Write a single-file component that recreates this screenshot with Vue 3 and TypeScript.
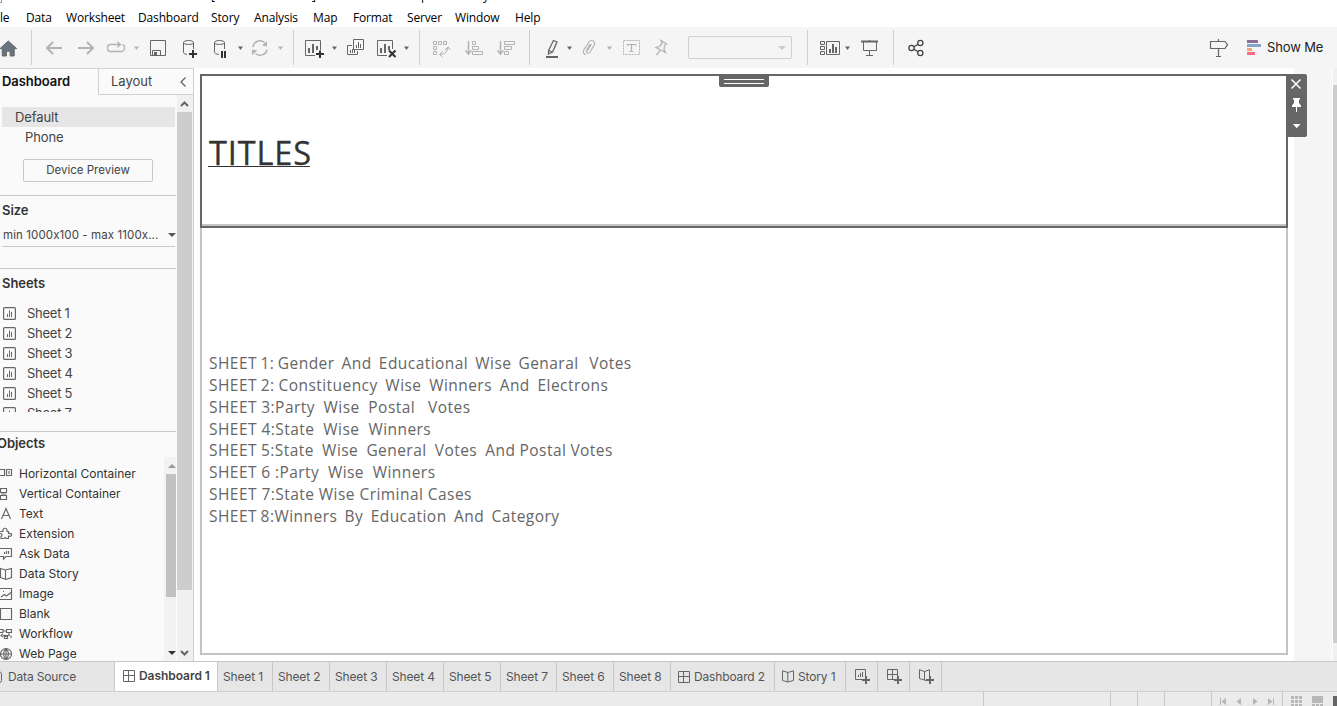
<script setup lang="ts">
interface Cell { x: number; w: number; name: string; dim?: boolean }

const menus = [
  { t: 'File', c: 'm-file' }, { t: 'Data', c: 'm-data' }, { t: 'Worksheet', c: 'm-ws' },
  { t: 'Dashboard', c: 'm-db' }, { t: 'Story', c: 'm-st' }, { t: 'Analysis', c: 'm-an' },
  { t: 'Map', c: 'm-map' }, { t: 'Format', c: 'm-fmt' }, { t: 'Server', c: 'm-srv' },
  { t: 'Window', c: 'm-win' }, { t: 'Help', c: 'm-help' },
]

// Toolbar glyphs share one drawing space; each cell shows its own slice of it.
const shapes: Record<string, string> = {
  home: '<path d="M8.3 41 0 48.6H2.3V56H6.4V51.2H10.1V56H14.2V48.6H16.6Z" fill="#697483"/>',
  back: '<path d="M53 42 47 48 53 54M47 48H62" stroke-width="2"/>',
  forward: '<path d="M87 42 93 48 87 54M78 48H93" stroke-width="2"/>',
  redo: '<path d="M119 44.5H110.5A3 3 0 0 0 107.5 47.500V48.500A3 3 0 0 0 110.500 51.500H121.500A3 3 0 0 0 124.500 48.500V47.500Q124.500 45 122.500 44.700" stroke-width="1.3"/><path d="M117.500 41 121.500 44.500 117.500 48Z" fill="#b3b3b3" stroke="none"/>',
  save: '<path d="M150.500 40.500H165.500V55.500H150.500ZM152.500 55V50.500H160.500V55"/><path d="M154 52H157V55H154Z" fill="#666" stroke="none"/>',
  dbadd: '<path d="M187 54.500Q183.500 54 183.500 52.500V42.500M193.500 42.500V49"/><ellipse cx="188.500" cy="42.500" rx="5" ry="2"/><path d="M193 50V58M189 54H197" stroke="#333" stroke-width="2"/>',
  dbpause: '<path d="M219 54.500Q214.500 54 214.500 52.500V42.500M224.500 42.500V49"/><ellipse cx="219.500" cy="42.500" rx="5" ry="2"/><path d="M222 51V58M225 51V58" stroke="#333" stroke-width="2"/>',
  refresh: '<path d="M253 47A7 7 0 0 1 264.500 42.500M267 49.500A7 7 0 0 1 255.500 53.500" stroke-width="1.5"/><path d="M267 41V46.500L262 45.500ZM252 55V49.500L257.500 50.500Z" fill="#b3b3b3" stroke="none"/>',
  newsheet: '<path d="M315 55.500H305.500V40.500H320.500V50"/><path d="M309 48V53M313 44V53M317 46V50" stroke-width="2"/><path d="M320 50.500V58M316 54H324" stroke="#333" stroke-width="2"/>',
  dup: '<path d="M353.500 39.500H363.500V49.500H353.500ZM352 45.500H347.500V54.500H357.500V51"/><path d="M356.500 45V48M358.500 42V48M360.500 44V48M350.500 50V53M352.500 49V53M354.500 50V53"/>',
  clear: '<path d="M387 55.500H377.500V40.500H392.500V49"/><path d="M381 48V53M385 44V53M389 46V50" stroke-width="2"/><path d="M389 50.500 395.500 57M395.500 50.500 389 57" stroke="#333" stroke-width="2"/>',
  swap: '<path d="M433.500 41.500H436.500V44.500H433.500ZM438.500 41.500H441.500V44.500H438.500ZM443.500 41.500H446.500V44.500H443.500ZM433.500 46.500H436.500V49.500H433.500ZM433.500 51.500H436.500V54.500H433.500ZM440 54.500Q447 54 448 47.500M445 50 448.200 47 450 50M442.500 51.500 439.500 54.500 442.500 57"/>',
  asc: '<path d="M468.500 41V54M465.500 50.500 468.500 54 471.500 50.500" stroke-width="1.5"/><path d="M472.500 41.500H475.500V44.500H472.500ZM472.500 46.500H478.500V49.500H472.500ZM472.500 51.500H482.500V54.500H472.500Z"/>',
  desc: '<path d="M500.500 41V54M497.500 50.500 500.500 54 503.500 50.500" stroke-width="1.5"/><path d="M504.500 41.500H514.500V44.500H504.500ZM504.500 46.500H511.500V49.500H504.500ZM504.500 51.500H508.500V54.500H504.500Z"/>',
  mark: '<path d="M548.500 50.500 553.500 40.500 557 42 552.500 52 548.500 54ZM548.500 50.500 552.500 52" stroke-width="1.300"/><path d="M546 57H558" stroke-width="2"/>',
  clip: '<path d="M591.500 44 586.500 52Q588 54.500 590 52L594.500 44.500Q595 40.500 591.500 40.500 590 40.500 588.500 42.500L583.500 50.500Q583 54.500 586 54.500M590 44 586.500 50.500" stroke-width="1.200"/>',
  text: '<path d="M623.500 40.500H639.500V54.500H623.500Z" stroke-dasharray="2 1"/><path d="M627.500 46V44.500H635.500V46M631.500 44.500V51.500M629.500 51.500H633.500" stroke-width="1.200"/>',
  pin: '<path d="M661 40.500 666.500 44 664.500 45.500 664 49.500 665.500 52.500 656 47.500 659.500 46.500 662 43.500ZM660 50.500 656.500 55" stroke-width="1.300"/>',
  cards: '<path d="M820.500 41.500H824.500V44.500H820.500ZM820.500 46.500H824.500V49.500H820.500ZM820.500 51.500H824.500V54.500H820.500ZM826.500 41.500H839.500V54.500H826.500Z"/><path d="M830 49V53M833 44V53M836 47V53" stroke-width="2"/>',
  present: '<path d="M861 41.500H878" stroke-width="2"/><path d="M863.500 42V50.500H876.500V42M869.500 40V41M869.500 51V55.500M866 55.500H873"/>',
  share: '<g stroke="#444" stroke-width="1.300"><path d="M914 46.700 918 44.200M914 49.300 918 51.800"/><circle cx="911.500" cy="48" r="2.600"/><circle cx="920.300" cy="43" r="2.600"/><circle cx="920.300" cy="53" r="2.600"/></g>',
  sign: '<path d="M1210.500 41.500H1225L1227.500 44.700 1225 48.500H1210.500ZM1218.500 39V41M1218.500 49V56M1216 56.500H1221" stroke-width="1.200"/>',
}
const caret = (x: number) => `<path d="M${x} 46.500H${x + 5}L${x + 2.5} 50Z" fill="currentColor" stroke="none"/>`
for (const x of [134, 238, 278, 332, 404, 567, 607, 845]) shapes['caret' + x] = caret(x)

const c = (name: string, x: number, w: number, dim = false): Cell => ({ name, x, w, dim })
const groups: Cell[][] = [
  [c('home', 0, 31)],
  [c('back', 32, 39, true), c('forward', 71, 31, true), c('redo', 102, 28, true), c('caret134', 130, 16, true), c('save', 146, 31), c('dbadd', 177, 33), c('dbpause', 210, 24), c('caret238', 234, 14), c('refresh', 248, 27, true), c('caret278', 275, 18, true)],
  [c('newsheet', 294, 34), c('caret332', 328, 15), c('dup', 343, 30), c('clear', 373, 28), c('caret404', 401, 18)],
  [c('swap', 420, 40, true), c('asc', 460, 32, true), c('desc', 492, 37, true)],
  [c('mark', 530, 33), c('caret567', 563, 16), c('clip', 579, 24, true), c('caret607', 603, 15, true), c('text', 618, 32, true), c('pin', 650, 38, true)],
  [c('cards', 808, 34), c('caret845', 842, 15), c('present', 857, 36)],
  [c('share', 894, 40)],
]

const sheets = ['Sheet 1', 'Sheet 2', 'Sheet 3', 'Sheet 4', 'Sheet 5', 'Sheet 7']
const objects = [
  { t: 'Horizontal Container', d: 'M-1.500 5.500H4.500V11.500H-1.500ZM6.500 5.500H11.500V11.500H6.500ZM9 7V10' },
  { t: 'Vertical Container', d: 'M.5 4.500H6.500V8.500H.5ZM.5 11.500H6.500V15.500H.5ZM1 10H6' },
  { t: 'Text', d: 'M1.500 15 6 4.500 10.500 15M3.200 11.500H8.800' },
  { t: 'Extension', d: 'M-1 7.500H3V5.500Q5 3 7 5.500V7.500H8.500V9.500Q12 9 11.500 11 11 13 8.500 12V14.500H6Q5.500 12.500 4 14.500H1V12.500Q3 11 1 9.500H-1' },
  { t: 'Ask Data', d: 'M-1 4.500H11.500V12.500H6L3.500 15V12.500H-1M4.500 8V10M6.500 7V10M8.500 7V10' },
  { t: 'Data Story', d: 'M.5 4.500 5.500 6 11.500 4.500V13.500L6 15.500 .5 13.500ZM5.500 6V15' },
  { t: 'Image', d: 'M-1 4.500H11.500V15.500H-1M1 13 4.500 10.500 6.500 12 11 8.500M3 7.500H4' },
  { t: 'Blank', d: 'M.5 4.500H11.500V15.500H.5Z' },
  { t: 'Workflow', d: 'M0 5.500H3V8.500H0M3 7H6M6.500 5.500H11.500V8.500H6.500ZM9 9V11.500H3M3 10 1 11.500 3 13M4.500 12.500H7.500V14.500H4.500ZM11 11.500V14' },
  { t: 'Web Page', d: 'M.5 10A5.500 5.500 0 1 1 11.500 10A5.500 5.500 0 1 1 .5 10H11.500M6 4.500Q1 10 6 15.500 11 10 6 4.500M6 4.500V15.500' },
]

const lines = [
  ['l1', 'SHEET 1: Gender  And  Educational  Wise  Genaral   Votes'],
  ['l2', 'SHEET 2: Constituency  Wise  Winners  And  Electrons'],
  ['l3', 'SHEET 3:Party  Wise  Postal   Votes'],
  ['l4', 'SHEET 4:State  Wise  Winners'],
  ['l5', 'SHEET 5:State  Wise  General  Votes  And Postal Votes'],
  ['l6', 'SHEET 6 :Party  Wise  Winners'],
  ['l7', 'SHEET 7:State Wise Criminal Cases'],
  ['l8', 'SHEET 8:Winners  By  Education  And  Category'],
]

const sheetTabs = [
  { t: 'Sheet 1', c: 'w55' }, { t: 'Sheet 2', c: 'w57' }, { t: 'Sheet 3', c: 'w57' }, { t: 'Sheet 4', c: 'w57' },
  { t: 'Sheet 5', c: 'w57' }, { t: 'Sheet 7', c: 'w56' }, { t: 'Sheet 6', c: 'w57' }, { t: 'Sheet 8', c: 'w57' },
]
</script>

<template>
  <div class="app">
    <header class="menubar">
      <div class="caption"><i class="appicon" /><span class="k1">[</span><span class="k2">]</span><span class="k3">p</span><span>y</span></div>
      <span v-for="m in menus" :key="m.t" class="menu" :class="m.c">{{ m.t }}</span>
    </header>

    <div class="toolbar">
      <template v-for="(g, gi) in groups" :key="gi">
        <div class="group">
          <svg v-for="i in g" :key="i.name" :class="{ dim: i.dim }" :width="i.w" height="41" :viewBox="`${i.x} 27 ${i.w} 41`" v-html="shapes[i.name]" />
          <div v-if="gi === 4" class="combo"><i class="tri" /></div>
        </div>
        <div v-if="gi < 6" class="sep" />
      </template>
      <div class="right">
        <svg width="38" height="41" viewBox="1209 27 38 41" v-html="shapes.sign" />
        <svg width="20" height="41" viewBox="0 0 20 41">
          <g stroke="none"><path d="M0 13H11V16H0Z" fill="#8a6d9c" /><path d="M0 17H14V20H0Z" fill="#83a6cf" /><path d="M0 21H5V24H0Z" fill="#f4a576" /><path d="M0 25H8V28H0Z" fill="#f96d80" /></g>
        </svg>
        <span class="showme">Show Me</span>
      </div>
    </div>

    <main class="body">
      <aside class="side">
        <div class="stabs">
          <div class="stab on">Dashboard</div>
          <div class="stab off"><span>Layout</span><svg width="8" height="10" viewBox="0 0 8 10"><path d="M6.500 .5 2 5 6.500 9.500" stroke-width="1.300" /></svg></div>
        </div>
        <div class="sbody">
          <div class="panel">
            <div class="dev sel">Default</div>
            <div class="dev phone">Phone</div>
            <div class="preview">Device Preview</div>
            <section class="size">
              <h4>Size</h4>
              <div class="range"><span>min 1000x100 - max 1100x...</span><i class="tri dark" /></div>
            </section>
            <section class="sheets">
              <h4>Sheets</h4>
              <div class="slist">
                <div v-for="s in sheets" :key="s" class="srow">
                  <svg width="13" height="13" viewBox="0 0 13 13"><rect x=".6" y=".6" width="11.800" height="11.800" rx="1" stroke-width="1.200" /><path d="M4.500 7V10M6.500 3.500V10M8.500 5V10" /></svg>
                  <span>{{ s }}</span>
                </div>
              </div>
            </section>
            <section class="objects">
              <h4>Objects</h4>
              <div class="oarea">
                <div class="olist">
                  <div v-for="o in objects" :key="o.t" class="orow">
                    <svg width="13" height="20" viewBox="0 0 13 20"><path :d="o.d" stroke-width="1.150" /></svg>
                    <span>{{ o.t }}</span>
                  </div>
                </div>
                <div class="inbar">
                  <i class="tri up" />
                  <div class="inthumb" />
                  <i class="tri dn" />
                </div>
              </div>
            </section>
          </div>
          <div class="bar">
            <svg width="15" height="17" viewBox="0 0 15 17"><path d="M4 11 7.500 7.500 11 11" stroke-width="2" /></svg>
            <div class="thumb" />
            <svg width="15" height="17" viewBox="0 0 15 17"><path d="M4 7 7.500 10.500 11 7" stroke-width="2" /></svg>
          </div>
        </div>
      </aside>

      <div class="canvas">
        <div class="dash">
          <div class="zone">
            <div class="handle" />
            <div class="title">TITLES</div>
            <svg class="tools" width="21" height="63" viewBox="0 0 21 63">
              <path d="M5.500 5.500 14.500 14.500M14.500 5.500 5.500 14.500" stroke="#fff" stroke-width="1.500" />
              <path d="M7 24H14V25.500H13V29L15 31.500V33H6V31.500L8 29V25.500H7ZM10 33H11V38H10Z" fill="#fff" stroke="none" />
              <path d="M7 50H14.500L10.700 54.200Z" fill="#fff" stroke="none" />
            </svg>
          </div>
          <div class="copy">
            <p v-for="l in lines" :key="l[0]" :class="l[0]">{{ l[1] }}</p>
          </div>
        </div>
      </div>
      <div class="gutter" />
      <div class="vbar"><div class="vthumb" /></div>
    </main>

    <nav class="tabs">
      <div class="tab source"><svg width="4" height="14" viewBox="0 0 4 14"><path d="M0 2Q1.500 2.500 1.500 3.500V10.500Q1.500 12 0 12.500" /></svg><span>Data Source</span></div>
      <div class="tab active">
        <svg width="12" height="12" viewBox="0 0 12 12"><path d="M.5 .5H11.500V11.500H.5ZM5.500 .5V11.500M.5 5.500H11.500" /></svg><span>Dashboard 1</span>
      </div>
      <div v-for="s in sheetTabs" :key="s.t" class="tab" :class="s.c"><span>{{ s.t }}</span></div>
      <div class="tab w104"><svg width="12" height="12" viewBox="0 0 12 12"><path d="M.5 .5H11.500V11.500H.5ZM5.500 .5V11.500M.5 5.500H11.500" /></svg><span>Dashboard 2</span></div>
      <div class="tab w71"><svg width="12" height="13" viewBox="0 0 12 13"><path d="M.5 .8 5.800 2.500 11.500 .8V10.500L6 12 .5 10.500ZM5.800 2.500V12" /></svg><span>Story 1</span></div>
      <div class="tab w32"><svg width="16" height="15" viewBox="0 0 16 15"><path d="M7 10.500H.5V.5H10.500V7M3.500 6V8M5.500 4V8M7.500 3V8" /><path d="M11 7V15M7 11H15" stroke-width="2" /></svg></div>
      <div class="tab w32"><svg width="16" height="15" viewBox="0 0 16 15"><path d="M7 10.500H.5V.5H10.500V7M5.500 .5V10.500M.5 5.500H10.500" /><path d="M11 7V15M7 11H15" stroke-width="2" /></svg></div>
      <div class="tab w32"><svg width="16" height="15" viewBox="0 0 16 15"><path d="M7 11.500 .5 9.500V.8L5.500 2.500 10.500 .8V7M5.500 2.500V11" /><path d="M11 7V15M7 11H15" stroke-width="2" /></svg></div>
    </nav>

    <footer class="status">
      <div class="s1" /><div class="s2" /><div class="s3" /><div class="s3" /><div class="s4" />
      <div class="s5">
        <svg width="70" height="14" viewBox="1212 692 70 14"><g fill="#b5b5b5" stroke="none"><path d="M1220 698H1221V705H1220ZM1226 698V705L1221.500 701.500ZM1241 698V705L1236.500 701.500ZM1253 698V705L1257.500 701.500ZM1268 698V705L1272.500 701.500ZM1273 698H1274V705H1273Z" /></g></svg>
      </div>
      <svg width="54" height="14" viewBox="1283 692 54 14"><g fill="#b8b8b8" stroke="none"><path d="M1291 696h3v3h-3zM1295 696h3v3h-3zM1299 696h3v3h-3zM1291 700h3v3h-3zM1295 700h3v3h-3zM1299 700h3v3h-3zM1291 704h3v2h-3zM1295 704h3v2h-3zM1299 704h3v2h-3zM1312 696h11v7h-11zM1312 704h3v2h-3zM1316 704h3v2h-3zM1320 704h3v2h-3z" /><path d="M1333 696h4v10h-4z" fill="#666" /></g></svg>
    </footer>
  </div>
</template>

<style>
body { overflow: hidden; }
svg { fill: none; stroke: #666; color: #666; display: block; flex: none; }
</style>

<style scoped>
.app { width: 1337px; height: 706px; display: flex; flex-direction: column; overflow: hidden; background: #fff; font: 13px/20px Inter, "Liberation Sans", sans-serif; font-feature-settings: "calt" 0; color: #444; }
.app * { box-sizing: border-box; }
.menubar { height: 27px; position: relative; flex: none; display: flex; padding-top: 9px; overflow: hidden; font: 12px/17px "Open Sans", "Noto Sans", sans-serif; color: #000; white-space: nowrap; letter-spacing: -.15px; }
.caption { position: absolute; left: 0; top: -13px; display: flex; }
.appicon { width: 2px; height: 16px; border: solid #999; border-width: 0 1px 1px 0; margin-right: 209px; }
.k1 { width: 101px; } .k2 { width: 109px; } .k3 { width: 62px; }
.menu { flex: none; }
.m-file { margin-left: -9px; width: 35px; }
.m-data { width: 40px; }
.m-ws { width: 72px; }
.m-db { width: 73px; }
.m-st { width: 43px; }
.m-an { width: 59px; }
.m-map { width: 40px; }
.m-fmt { width: 54px; }
.m-srv { width: 48px; }
.m-win { width: 60px; }
.toolbar { height: 41px; flex: none; background: #f5f5f5; display: flex; align-items: center; }
.group { display: flex; align-items: center; }
.dim { stroke: #b3b3b3; color: #b3b3b3; }
.sep { width: 1px; height: 35px; background: #cfcfcf; }
.combo { width: 104px; height: 23px; border: 1px solid #d0d0d0; border-radius: 2px; margin-right: 15px; display: flex; align-items: center; justify-content: flex-end; padding-right: 5px; }
.tri { display: block; border: 3.5px solid transparent; border-width: 4px 4px 0; border-top-color: #ccc; }
.tri.dark { border-top-color: #555; }
.right { margin-left: auto; display: flex; align-items: center; padding-right: 15px; }
.showme { font-size: 13px; color: #222; width: 55px; white-space: nowrap; letter-spacing: -.15px; line-height: 19px; padding-bottom: 1px; }
.body { height: 593px; flex: none; display: flex; }
.side { width: 194px; background: #fafafa; border-right: 1px solid #d0d0d0; border-top: 1px solid #d4d4d4; display: flex; flex-direction: column; }
.stabs { display: flex; height: 26px; flex: none; }
.stab { line-height: 25px; }
.on { width: 98px; padding-left: 2px; font-weight: 600; font-size: 13px; color: #111; letter-spacing: -.05px; }
.off { flex: 1; border-left: 1px solid #d0d0d0; border-bottom: 1px solid #d0d0d0; padding: 0 6px 0 12px; font-size: 13px; display: flex; justify-content: space-between; align-items: center; }
.sbody { display: flex; flex: 1; min-height: 0; }
.panel { width: 176px; padding-top: 12px; display: flex; flex-direction: column; overflow: hidden; }
.dev { height: 20px; line-height: 20px; flex: none; font-size: 13px; letter-spacing: -.1px; }
.sel { background: #e6e6e6; margin: 0 1px 0 2px; padding-left: 13px; }
.phone { padding-left: 25px; }
.preview { flex: none; width: 130px; height: 23px; border: 1px solid #c8c8c8; border-radius: 2px; margin: 12px 0 13px 23px; text-align: center; font-size: 11.5px; line-height: 20px; }
h4 { margin: 0; font-size: 13px; font-weight: 600; color: #333; line-height: 20px; padding-left: 2px; letter-spacing: -.05px; }
section { border-top: 1px solid #c8c8c8; flex: none; }
.size { height: 73px; padding-top: 4px; }
.range { display: flex; justify-content: space-between; align-items: center; height: 27px; margin: 0 1px 0 2px; padding-left: 1px; border-bottom: 1px solid #c8c8c8; font-size: 11.5px; white-space: nowrap; padding-top: 3px; letter-spacing: .1px; }
.range .tri { margin-right: -1px; }
.sheets { height: 163px; padding-top: 4px; }
.slist { height: 109px; margin-top: 10px; overflow: hidden; }
.srow { display: flex; height: 20px; padding-left: 3px; font-size: 13px; letter-spacing: -.25px; align-items: center; }
.srow span { margin-left: 11px; line-height: 20px; }
.objects { height: 230px; padding-top: 1px; }
.objects h4 { margin-left: -5px; }
.oarea { display: flex; height: 208px; margin-top: 4px; }
.olist { width: 164px; padding-top: 7px; overflow: hidden; }
.orow { display: flex; height: 20px; font-size: 12px; color: #333; white-space: nowrap; }
.orow span { margin-left: 6px; }
.inbar { width: 12px; background: #f2f2f2; padding: 7px 0 8px 2px; display: flex; flex-direction: column; align-items: center; }
.inthumb { width: 10px; height: 123px; background: #c1c1c1; margin-top: 6px; }
.up { transform: rotate(180deg); border-top-color: #999; margin-right: -2px; }
.dn { border-top-color: #333; margin-top: 54px; margin-right: -2px; }
.bar { width: 16px; margin-left: 1px; background: #f0f0f0; display: flex; flex-direction: column; }
.thumb { height: 478px; background: #cdcdcd; width: 15px; margin-bottom: 54px; flex: none; }
.canvas { width: 1100px; padding: 6px; background: #fff; }
.dash { width: 1088px; height: 581px; border: 2px solid #c4c4c4; border-top: 0; }
.zone { position: relative; width: 1088px; height: 154px; margin-left: -2px; border: 2px solid #666; box-shadow: inset 0 -2px #c4c4c4; padding: 54px 0 0 6px; }
.handle { position: absolute; left: 517px; top: -1px; width: 50px; height: 12px; border-radius: 0 0 2px 2px; background: linear-gradient(#666 4px, #fff 4px 5px, #666 5px 8px, #fff 8px 9px, #666 9px) 5px 0 / 40px 12px no-repeat #666; }
.title { display: inline-block; font: 32.5px/46px "Open Sans", "Noto Sans", sans-serif; letter-spacing: .85px; color: #333; -webkit-text-stroke: .3px #333; padding-left: 1px; width: 102px; background: linear-gradient(#333, #333) 0 36px / 100% 1px no-repeat; }
.tools { position: absolute; left: 1084px; top: -2px; background: #666; border-radius: 0 2px 2px 0; }
.copy { padding: 125px 0 0 7px; font: 15.5px/21.86px "Open Sans", "Noto Sans", sans-serif; color: #666; letter-spacing: .45px; }
.copy p { margin: 0; white-space: pre; }
.l1 { word-spacing: -.94px; } .l2 { word-spacing: -.64px; } .l3 { word-spacing: -.15px; }
.l5 { word-spacing: -.4px; } .l6 { word-spacing: -.15px; } .l8 { word-spacing: -.8px; }
.gutter { width: 39px; background: #f5f5f5; border-right: 1px solid #fff; }
.vbar { flex: 1; background: #f0f0f0; padding-top: 17px; }
.vthumb { height: 558px; background: #cdcdcd; }
.tabs { height: 31px; flex: none; background: #e6e6e6; border-top: 1px solid #c8c8c8; border-bottom: 1px solid #d0d0d0; display: flex; font-size: 12px; color: #555; white-space: nowrap; }
.tab { flex: none; border-right: 1px solid #c8c8c8; display: flex; align-items: center; padding-left: 5px; letter-spacing: -.15px; }
.tab svg + span { margin-left: 4px; }
.source { width: 115px; padding-left: 0; }
.active { width: 103px; background: #fff; padding: 0 0 2px 8px; font-weight: 600; color: #444; letter-spacing: -.05px; }
.w55 { width: 55px; } .w56 { width: 56px; } .w57 { width: 57px; } .w104 { width: 104px; padding-left: 7px; } .w71 { width: 71px; padding-left: 7px; } .w32 { width: 32px; padding-left: 9px; }
.status { flex: 1; background: #ebebeb; display: flex; }
.status div { border-right: 1px solid #c8c8c8; }
.s1 { width: 984px; } .s2 { width: 127px; } .s3 { width: 27px; } .s4 { width: 47px; } .s5 { width: 71px; }
</style>
